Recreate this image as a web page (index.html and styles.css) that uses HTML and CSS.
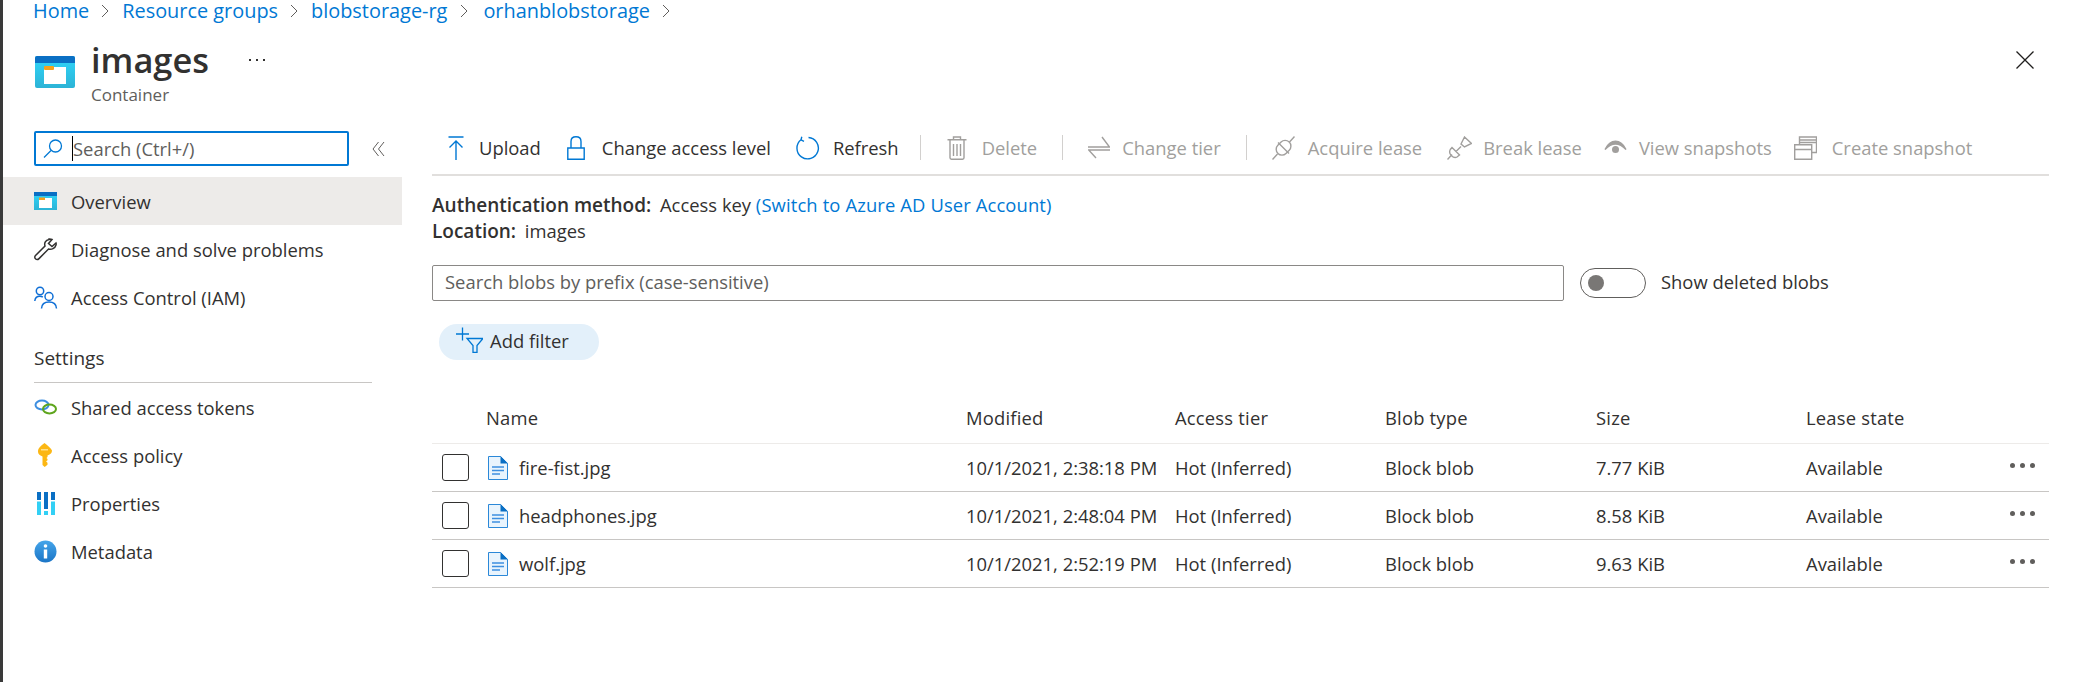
FILE: index.html
```html
<!doctype html>
<html>
<head>
<meta charset="utf-8">
<title>images - Container</title>
<link rel="stylesheet" href="styles.css">
</head>
<body>
<div class="strip"></div>
<div class="page">
	<div class="crumbs">
		<a>Home</a>
		<svg class="chev" width="8" height="14" viewBox="0 0 8 14"><path d="M1 1l6 6-6 6"/></svg>
		<a>Resource groups</a>
		<svg class="chev" width="8" height="14" viewBox="0 0 8 14"><path d="M1 1l6 6-6 6"/></svg>
		<a>blobstorage-rg</a>
		<svg class="chev chev-wide" width="8" height="14" viewBox="0 0 8 14"><path d="M1 1l6 6-6 6"/></svg>
		<a>orhanblobstorage</a>
		<svg class="chev" width="8" height="14" viewBox="0 0 8 14"><path d="M1 1l6 6-6 6"/></svg>
	</div>

	<div class="head">
		<svg class="head-icon" width="40" height="32" viewBox="0 0 40 32">
			<rect width="40" height="32" rx="2" fill="url(#sky)"/>
			<path d="M2 0h36a2 2 0 0 1 2 2v5H0V2a2 2 0 0 1 2-2z" fill="#0a6fc4"/>
			<rect x="9" y="11" width="22" height="17" fill="#fff"/>
			<rect x="9" y="10" width="10" height="4" rx="1" fill="#f7a21b"/>
		</svg>
		<div class="head-text">
			<h1>images</h1>
			<div class="head-sub">Container</div>
		</div>
		<div class="head-more"><i></i><i></i><i></i></div>
		<svg class="close" width="18" height="18" viewBox="0 0 18 18"><path d="M.5.5l17 17M17.500.5l-17 17"/></svg>
	</div>

	<div class="body">
		<div class="side">
			<div class="side-top">
				<div class="side-search">
					<svg width="20" height="19" viewBox="0 0 20 19"><circle cx="12.500" cy="7" r="6" class="s-blue"/><path d="M8 11.500L1 18.500" class="s-blue"/></svg>
					<span class="caret"></span><span>Search (Ctrl+/)</span>
				</div>
				<svg class="collapse" width="13" height="16" viewBox="0 0 13 16"><path d="M6.500 1L1 8l5.500 7M12 1L6.500 8l5.500 7"/></svg>
			</div>

			<div class="nav on">
				<span class="nav-icon"><svg width="23" height="18" viewBox="0 0 23 18"><rect width="23" height="18" fill="url(#sky)"/><rect width="23" height="4" fill="#0a6fc4"/><rect x="5" y="6" width="13" height="10" fill="#fff"/><rect x="5" y="5.500" width="6" height="2.500" fill="#f7a21b"/></svg></span>
				Overview
			</div>
			<div class="nav">
				<span class="nav-icon"><svg width="24" height="23" viewBox="0 0 24 23"><path d="M15 1.500c-3.500.5-5 3.500-4 6.500L1.500 17.500c-1 1-1 2.500.2 3.500 1 .8 2.300.6 3.300-.4L14.500 11c3 1 6.500-.5 7.500-4 .2-.8.2-1.500 0-2l-4 3.500-3.500-3 3.500-4c-.8-.4-1.700-.6-3-.5z" fill="none" stroke="#323130" stroke-width="1.500"/></svg></span>
				Diagnose and solve problems
			</div>
			<div class="nav">
				<span class="nav-icon"><svg width="24" height="23" viewBox="0 0 24 23"><g fill="none" stroke="#0f6fd6" stroke-width="1.500"><circle cx="6" cy="5" r="3.700"/><path d="M.8 15c.3-3 2-4.800 5-4.800 1.200 0 2.300.3 3 .9"/><circle cx="15" cy="10.500" r="4"/><path d="M7.500 22.500c.2-4 3-6.500 7.500-6.500s7.300 2.500 7.500 6.500"/></g></svg></span>
				Access Control (IAM)
			</div>

			<div class="side-title">Settings</div>

			<div class="nav">
				<span class="nav-icon"><svg width="24" height="16" viewBox="0 0 24 16"><g fill="none" stroke-width="2"><ellipse cx="8" cy="6" rx="6.500" ry="4.500" stroke="#3e8fe0"/><ellipse cx="15.500" cy="10" rx="6.500" ry="4.500" stroke="#5ea51d"/></g></svg></span>
				Shared access tokens
			</div>
			<div class="nav">
				<span class="nav-icon"><svg width="24" height="24" viewBox="0 0 24 24"><path d="M10.500 0C7 3 4 5 4 8.500c0 2.500 1.500 3.800 4.500 5V22l2.200 2 2.800-2.300v-2l-1.400-1.200 1.400-1.200v-1.300l-1-1 1-1v-1.400c3-1.200 4.500-2.600 4.500-5C17 5 14 3 10.500 0z" fill="#fcb714"/><rect x="7" y="6" width="7" height="1.500" fill="#ffe08a"/></svg></span>
				Access policy
			</div>
			<div class="nav">
				<span class="nav-icon"><svg width="24" height="23" viewBox="0 0 24 23"><rect x="3" width="4" height="8" fill="#0a6fc4"/><rect x="3" y="9.500" width="4" height="13.500" fill="#32d0f5"/><rect x="10" width="4" height="17" fill="#0a6fc4"/><rect x="10" y="19" width="4" height="4" fill="#32d0f5"/><rect x="17" width="4" height="8" fill="#0a6fc4"/><rect x="17" y="9.500" width="4" height="13.500" fill="#32d0f5"/></svg></span>
				Properties
			</div>
			<div class="nav">
				<span class="nav-icon"><svg width="23" height="23" viewBox="0 0 23 23"><circle cx="11.500" cy="11.500" r="11" fill="url(#info)"/><circle cx="11.500" cy="6" r="1.800" fill="#fff"/><rect x="9.800" y="9.500" width="3.400" height="9" fill="#fff"/></svg></span>
				Metadata
			</div>
		</div>

		<div class="main">
			<div class="tools">
				<div class="tool">
					<svg width="16" height="24" viewBox="0 0 16 24" class="ic-on"><path d="M.5 1h15M8 5v19M1.500 11.500L8 5l6.500 6.500"/></svg>
					Upload
				</div>
				<div class="tool tool-lock">
					<svg width="18" height="24" viewBox="0 0 18 24" class="ic-on"><path d="M.8 12h16.400v11.200H.8zM4 12V5.500c0-3 2-4.700 5-4.700s5 1.700 5 4.700V12"/></svg>
					Change access level
				</div>
				<div class="tool tool-refresh">
					<svg width="24" height="24" viewBox="0 0 24 24" class="ic-on"><path d="M12.500 1.500A10.700 10.700 0 1 1 5 3.800M5.800 .8L5 3.800l3 1.500"/></svg>
					Refresh
				</div>
				<span class="tool-sep sep-first"></span>
				<div class="tool off">
					<svg width="20" height="24" viewBox="0 0 20 24" class="ic-off"><path d="M.5 3.800h19M6.500 3.800V1h7v2.800M3 3.800v18c0 .8.600 1.400 1.400 1.400h11.200c.8 0 1.400-.6 1.400-1.400v-18M6.500 8v12M10 8v12M13.500 8v12"/></svg>
					Delete
				</div>
				<span class="tool-sep"></span>
				<div class="tool off tool-tier">
					<svg width="22" height="23" viewBox="0 0 22 23" class="ic-off"><path d="M0 11h21.500L14 1M22 14H.7L8 22"/></svg>
					Change tier
				</div>
				<span class="tool-sep"></span>
				<div class="tool off tool-acq">
					<svg width="23" height="24" viewBox="0 0 23 24" class="ic-off"><path d="M.5 23.500l5-5.500M17.500 6L22.500.5M6 6.500l11 11"/><rect x="3.500" y="6" width="16" height="11.500" rx="5.700" transform="rotate(-45 11.500 11.700)"/></svg>
					Acquire lease
				</div>
				<div class="tool off tool-break">
					<svg width="25" height="24" viewBox="0 0 25 24" class="ic-off"><path d="M.5 23.500l4.500-5M5 11.500l7.500 7.500-2.500 2c-2 1.200-3.500.7-5.500-1.200S2 16 3.300 13.500zM9 15.500l5-5M14 8l3.500-7 7 6.500-7 3.500z"/></svg>
					Break lease
				</div>
				<div class="tool off tool-view">
					<svg width="23" height="24" viewBox="0 0 23 24" class="ic-off"><path d="M1 13.500C4 7.500 7.500 5.300 11.500 5.300S19 7.500 22 13.500C18.500 9.800 15 8 11.500 8S4.500 9.800 1 13.500z" fill="#a19f9d"/><circle cx="11.500" cy="13.500" r="3.500" fill="#a19f9d" stroke="none"/></svg>
					View snapshots
				</div>
				<div class="tool off tool-snap">
					<svg width="23" height="24" viewBox="0 0 23 24" class="ic-off"><path d="M.7 8.700h17v14.600H.7zM.7 13.500h17M5.500 8.700V1h17v15.500h-4.800M5.500 4h17M5.500 6.500h17"/></svg>
					Create snapshot
				</div>
			</div>

			<div class="info">
				<div><b>Authentication method:</b> Access key <a class="switch">(Switch to Azure AD User Account)</a></div>
				<div><b>Location:</b> images</div>
			</div>

			<div class="filter-row">
				<div class="prefix">Search blobs by prefix (case-sensitive)</div>
				<span class="toggle"><i></i></span>
				<span class="toggle-label">Show deleted blobs</span>
			</div>

			<div class="pill">
				<svg width="27" height="26" viewBox="0 0 27 26"><path d="M0 7h13M6.500 .5v13M11 11.500h16L21 18.500v7h-4v-7z" fill="none" stroke="#0078d4" stroke-width="1.300"/></svg>
				Add filter
			</div>

			<div class="grid">
				<div class="row row-head">
					<span></span><span>Name</span><span>Modified</span><span>Access tier</span><span>Blob type</span><span>Size</span><span>Lease state</span><span></span>
				</div>
				<div class="row">
					<span class="check"></span>
					<span class="file"><svg width="20" height="24" viewBox="0 0 20 24"><use href="#page"/></svg>fire-fist.jpg</span>
					<span>10/1/2021, 2:38:18 PM</span><span>Hot (Inferred)</span><span>Block blob</span><span>7.77 KiB</span><span>Available</span>
					<span class="dots"><i></i><i></i><i></i></span>
				</div>
				<div class="row">
					<span class="check"></span>
					<span class="file"><svg width="20" height="24" viewBox="0 0 20 24"><use href="#page"/></svg>headphones.jpg</span>
					<span>10/1/2021, 2:48:04 PM</span><span>Hot (Inferred)</span><span>Block blob</span><span>8.58 KiB</span><span>Available</span>
					<span class="dots"><i></i><i></i><i></i></span>
				</div>
				<div class="row">
					<span class="check"></span>
					<span class="file"><svg width="20" height="24" viewBox="0 0 20 24"><use href="#page"/></svg>wolf.jpg</span>
					<span>10/1/2021, 2:52:19 PM</span><span>Hot (Inferred)</span><span>Block blob</span><span>9.63 KiB</span><span>Available</span>
					<span class="dots"><i></i><i></i><i></i></span>
				</div>
			</div>
		</div>
	</div>
</div>

<svg width="0" height="0" class="defs">
	<linearGradient id="sky" x1="0" y1="0" x2="0" y2="1"><stop offset="0" stop-color="#2fd6fa"/><stop offset="1" stop-color="#2cb3d6"/></linearGradient>
	<linearGradient id="info" x1="0" y1="0" x2="0" y2="1"><stop offset="0" stop-color="#45a5ea"/><stop offset="1" stop-color="#1b75c6"/></linearGradient>
	<g id="page">
		<path d="M.5.5h12l7 7v16H.5z" fill="#e9f4fd" stroke="#2b88d8"/>
		<path d="M12.500 0L20 7.500h-7.500z" fill="#0a6fc4"/>
		<path d="M4 11h12M4 14.500h12M4 18h8" stroke="#3e8fe0" stroke-width="1.500"/>
	</g>
</svg>
</body>
</html>
```
FILE: styles.css
```css
*{ margin:0; padding:0; box-sizing:border-box; }
html,body{ height:100%; background:#fff; }
body{ display:flex; overflow:hidden; font-family:"Open Sans","Liberation Sans",sans-serif; font-size:18.400px; color:#323130; }
a{ color:#0078d4; }
b{ font-weight:600; font-size:19px; }
.defs{ position:absolute; }

.strip{ width:3px; background:#3a3a3a; flex:none; }
.page{ flex:1; min-width:0; }

/* breadcrumb */
.crumbs{ display:flex; align-items:center; height:21px; margin-bottom:1px; padding-left:30px; font-size:19.900px; }
.chev{ margin:0 13px 0 12px; fill:none; stroke:#605e5c; stroke-width:1; }
.chev-wide{ margin:0 15px 0 13px; }

/* title */
.head{ display:flex; height:99px; padding:34px 28px 0 32px; align-items:flex-start; }
.head-icon{ margin-right:16px; }
.head-text{ margin-top:-17px; }
h1{ font-size:34.400px; font-weight:600; line-height:42px; }
.head-sub{ font-size:17px; color:#605e5c; line-height:20px; margin-top:4px; }
.head-more{ display:flex; gap:5px; margin-left:40px; margin-top:3px; }
.head-more i{ width:2px; height:2px; background:#323130; }
.close{ margin-left:auto; margin-right:15px; margin-top:-5px; fill:none; stroke:#201f1e; stroke-width:1.300; }

.body{ display:flex; }

/* left menu */
.side{ width:399px; flex:none; padding-top:10px; }
.side-top{ display:flex; align-items:center; padding-left:31px; height:35px; margin-bottom:11px; }
.side-search{ display:flex; align-items:center; width:315px; height:35px; border:2px solid #0078d4; border-radius:2px; padding-left:7px; color:#605e5c; }
.side-search svg{ margin-right:9px; fill:none; }
.s-blue{ fill:none; stroke:#0078d4; stroke-width:1.300; }
.caret{ width:1px; height:25px; background:#000; margin-right:0; }
.collapse{ margin-left:23px; fill:none; stroke:#605e5c; stroke-width:1; }
.nav{ display:flex; align-items:center; height:48px; padding-left:31px; }
.nav.on{ background:#edebe9; }
.nav-icon{ display:flex; align-items:center; width:37px; flex:none; }
.side-title{ margin:25px 0 0 31px; width:338px; height:37px; line-height:24px; font-size:19px; font-weight:500; border-bottom:1px solid #c8c6c4; }

/* right side */
.main{ flex:1; min-width:0; margin-left:30px; margin-right:28px; }
.tools{ display:flex; align-items:center; height:55px; padding:0 0 0 16px; border-bottom:2px solid #e1dfdd; gap:25px; }
.tool{ display:flex; align-items:center; gap:15px; white-space:nowrap; }
.tool svg{ flex:none; fill:none; stroke-width:1.400; }
.tool-lock{ gap:17px; margin-left:1px; }
.tool-refresh{ gap:13px; }
.tool-tier{ gap:12px; }
.tool-acq{ gap:13px; }
.tool-break{ gap:11px; }
.tool-view{ gap:12px; margin-left:-3px; }
.tool-snap{ margin-left:-3px; }
.ic-on{ stroke:#0078d4; }
.ic-off{ stroke:#a19f9d; }
.off{ color:#a19f9d; }
.tool-sep{ width:1px; height:25px; background:#d2d0ce; }
.sep-first{ margin:0 1px 0 -4px; }

.info{ padding-top:16px; line-height:25px; height:74px; }
.info b{ margin-right:4px; }
.switch{ letter-spacing:.12px; }

.filter-row{ display:flex; align-items:center; margin-top:15px; }
.prefix{ width:1132px; height:36px; line-height:32px; padding-left:12px; border:1px solid #8a8886; border-radius:2px; color:#605e5c; }
.toggle{ width:66px; height:30px; border:1px solid #605e5c; border-radius:15px; margin-left:16px; padding:6px 0 0 7px; }
.toggle i{ display:block; width:16px; height:16px; border-radius:50%; background:#797775; }
.toggle-label{ margin:-3px 0 0 15px; }

.pill{ display:flex; align-items:center; gap:7px; width:160px; height:36px; margin:23px 0 0 7px; padding:0 0 3px 17px; background:#e3f0fa; border-radius:18px; }
.pill svg{ margin-top:-1px; }

.grid{ margin-top:36px; }
.row{ display:grid; grid-template-columns:54px 480px 209px 210px 211px 210px 1fr 62px; align-items:center; height:48px; border-bottom:1px solid #c8c6c4; }
.row-head{ font-weight:500; letter-spacing:.2px; padding-bottom:5px; border-bottom-color:#edebe9; }
.check{ width:27px; height:27px; margin-left:10px; border:1px solid #323130; border-radius:3px; }
.file{ display:flex; align-items:center; gap:11px; margin-left:2px; color:#323130; }
.dots{ display:flex; gap:5px; margin-top:-5px; margin-left:23px; }
.dots i{ width:5px; height:5px; border-radius:50%; background:#605e5c; }
```
